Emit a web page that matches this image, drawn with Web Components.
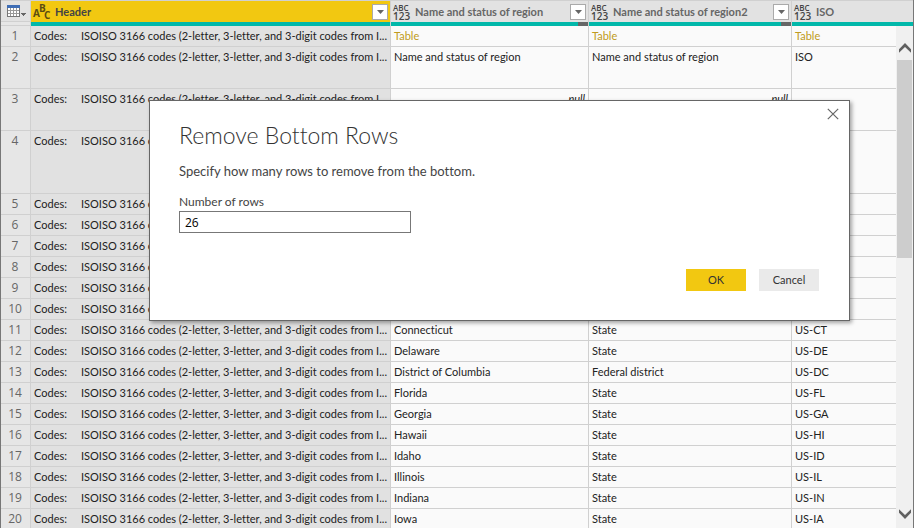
<!DOCTYPE html>
<html lang="en">
<head>
<meta charset="utf-8">
<title>Remove Bottom Rows</title>
<style>
html, body { margin: 0; height: 100%; }
body { font-family: Lato, "Open Sans", sans-serif; font-size: 11px; color: #222; font-variant-ligatures: none; }
</style>
</head>
<body>
<query-editor></query-editor>

<template id="editor-tpl">
<style>
:host { display: block; position: relative; height: 100vh; box-sizing: border-box; overflow: hidden; background: #fafafa; border-left: 1px solid #777; border-right: 1px solid #777; }
data-scrollbar { position: absolute; top: 26px; right: 0; bottom: 0; }
remove-rows-dialog { position: absolute; top: 100px; left: 148px; right: 63px; }
</style>
<data-grid></data-grid>
<data-scrollbar></data-scrollbar>
<remove-rows-dialog heading="Remove Bottom Rows">
  <span slot="description">Specify how many rows to remove from the bottom.</span>
  <span slot="label">Number of rows</span>
</remove-rows-dialog>
</template>

<template id="grid-tpl">
<style>
:host { display: block; }
table { width: 100%; table-layout: fixed; border-collapse: separate; border-spacing: 0; border-top: 1px solid #d0d0d0; }
.c0 { width: 30px; } .c1 { width: 360px; } .c2 { width: 198px; } .c3 { width: 203px; }
th, td { box-sizing: border-box; padding: 0; text-align: left; vertical-align: top; border-right: 1px solid #d0d0d0; border-bottom: 1px solid #d0d0d0; }
th:last-child, td:last-child { border-right: 0; }
thead th { height: 21px; background: #e2e2e2; border-bottom: 0; }
thead th.sel { background: #f2c811; }
thead .corner { border-bottom: 1px solid #d0d0d0; }
thead .q td { height: 4px; border-bottom: 0; line-height: 0; background: #01b8aa; }
thead .q td:first-child { background: #e6e6e6; border-bottom: 1px solid #d0d0d0; }
thead .q .part { background: linear-gradient(to left, #666 10px, #01b8aa 10px); }
tbody th, tbody td { height: 21px; line-height: 20px; white-space: pre; overflow: hidden; background: #fafafa; }
tbody th { background: #e6e6e6; color: #666; font: 12px/20px "Open Sans", sans-serif; text-align: center; padding-right: 1px; }
tbody td { padding: 0 3px; }
tbody td.sel { background: #e1e1e1; tab-size: 47px; }
tr.h2 td { height: 42px; } tr.h3 td { height: 63px; }
.link { color: #c09a20; text-decoration: none; }
.null { text-align: right; font-style: italic; }
</style>
<table>
<colgroup><col class="c0"><col class="c1"><col class="c2"><col class="c3"><col></colgroup>
<thead>
<tr>
<th class="corner"><table-menu></table-menu></th>
<th class="sel"><column-header type="text" selected filter>Header</column-header></th>
<th><column-header filter>Name and status of region</column-header></th>
<th><column-header filter>Name and status of region2</column-header></th>
<th><column-header>ISO</column-header></th>
</tr>
<tr class="q"><td></td><td></td><td class="part"></td><td class="part"></td><td></td></tr>
</thead>
<tbody></tbody>
</table>
</template>

<template id="menu-tpl">
<style>
:host { display: block; height: 20px; }
button { display: flex; align-items: center; width: 100%; height: 20px; padding: 0 0 0 6px; border: 0; background: none; }
svg { display: block; }
</style>
<button aria-label="Table options">
<svg width="20" height="13" viewBox="0 0 20 13" shape-rendering="crispEdges">
<path fill="#fff" d="M0 0h13v12H0z"/>
<path fill="#3e6db5" d="M0 0h13v3H0z"/>
<path fill="#777" d="M0 3h1v9H0zM12 3h1v9h-1zM0 11h13v1H0z"/>
<path fill="#999" d="M3 3h1v8H3zM6 3h1v8H6zM9 3h1v8H9zM1 5h11v1H1zM1 8h11v1H1z"/>
<path fill="#666" d="M14 8h5v1h-1v1h-1v1h-1v-1h-1V9h-1z"/>
</svg>
</button>
</template>

<template id="header-tpl">
<style>
:host { display: flex; align-items: center; height: 21px; padding: 0 2px; font-weight: 700; color: #666; }
:host([selected]) { color: #444; }
.any { display: grid; width: 18px; font: 600 8px/9px "Open Sans", sans-serif; color: #444; }
.any b { font-weight: 600; font-size: 10px; }
.abc { display: flex; align-items: start; width: 18px; height: 20px; font: 700 10px/10px "Open Sans", sans-serif; color: #5b4d12; }
.abc i { font-style: normal; width: 5px; }
.abc i:nth-child(1) { padding-top: 6px; width: 6px; }
.abc i:nth-child(2) { padding-top: 1px; }
.abc i:nth-child(3) { padding-top: 8px; }
.name { flex: 1; padding-left: 4px; line-height: 20px; white-space: nowrap; }
button { display: grid; place-items: center; width: 16px; height: 16px; padding: 0; border: 1px solid #aaa; background: #fff; }
</style>
<span class="icon"></span>
<span class="name"><slot></slot></span>
</template>

<template id="scroll-tpl">
<style>
:host { display: flex; flex-direction: column; width: 17px; background: #f0f0f0; }
button { display: grid; place-items: center; height: 34px; padding: 9px 0 0; border: 0; background: none; }
button:last-child { height: 28px; padding: 0; }
.track { flex: 1; padding: 0 1px; }
.thumb { height: 45%; background: #cdcdcd; }
</style>
<button aria-label="Scroll up"><svg width="12" height="10" viewBox="0 0 12 10"><path d="M0 6.2 6 0l6 6.2v3.6L6 4 0 9.800z" fill="#606060"/></svg></button>
<div class="track"><div class="thumb"></div></div>
<button aria-label="Scroll down"><svg width="12" height="10" viewBox="0 0 12 10"><path d="M0 .2 6 6l6-5.800v3.600L6 10 0 3.800z" fill="#606060"/></svg></button>
</template>

<template id="dialog-tpl">
<style>
:host { display: block; box-sizing: border-box; background: #fff; border: 1px solid #666; box-shadow: 2px 2px 4px rgba(0,0,0,.35); }
form { position: relative; padding: 20px 30px 29px 29px; }
h1 { margin: 0; font-weight: 300; font-size: 23px; line-height: 28px; color: #333; }
p { margin: 12px 0 0; font-size: 13px; line-height: 20px; color: #444; }
label { display: block; margin-top: 12px; font-size: 12px; line-height: 18px; color: #444; }
input { display: block; box-sizing: border-box; width: 232px; max-width: 100%; height: 22px; padding: 0 5px; border: 1px solid #777; border-radius: 0; outline: 0; background: #fff; font: 12px/20px "Open Sans", sans-serif; color: #000; }
.actions { display: flex; justify-content: flex-end; gap: 13px; margin-top: 36px; }
.actions button { width: 60px; height: 22px; padding: 0; border: 0; background: #eaeaea; font: 11px/22px Lato, sans-serif; color: #333; }
.actions .ok { background: #f2c811; }
.close { position: absolute; top: 5px; right: 8px; width: 16px; height: 16px; padding: 0; border: 0; background: none; }
.close svg { display: block; margin: auto; }
</style>
<form role="dialog" aria-labelledby="t" onsubmit="return false">
<h1 id="t"></h1>
<p><slot name="description"></slot></p>
<label for="n"><slot name="label"></slot></label>
<input id="n" type="text" inputmode="numeric" value="26">
<div class="actions"><button class="ok" type="submit">OK</button><button type="button">Cancel</button></div>
<button class="close" type="button" aria-label="Close"><svg width="12" height="12" viewBox="0 0 12 12"><path d="m.8.8 10.400 10.400M11.200.8.8 11.200" stroke="#666" stroke-width="1.200"/></svg></button>
</form>
</template>

<script>
class TemplateElement extends HTMLElement {
  constructor() {
    super();
    this.attachShadow({ mode: 'open' }).append(document.getElementById(this.constructor.tpl).content.cloneNode(true));
  }
}

customElements.define('table-menu', class extends TemplateElement { static tpl = 'menu-tpl'; });
customElements.define('data-scrollbar', class extends TemplateElement { static tpl = 'scroll-tpl'; });

customElements.define('column-header', class extends TemplateElement {
  static tpl = 'header-tpl';
  connectedCallback() {
    if (this.ready) return;
    this.ready = true;
    const icon = this.shadowRoot.querySelector('.icon');
    icon.innerHTML = this.getAttribute('type') === 'text'
      ? '<span class="abc"><i>A</i><i>B</i><i>C</i></span>'
      : '<span class="any"><span>ABC</span><b>123</b></span>';
    if (this.hasAttribute('filter')) {
      const button = document.createElement('button');
      button.setAttribute('aria-label', 'Filter ' + this.textContent);
      button.innerHTML = '<svg width="7" height="4" viewBox="0 0 7 4"><path d="M0 0h7L3.500 4z" fill="#666"/></svg>';
      this.shadowRoot.append(button);
    }
  }
});

customElements.define('remove-rows-dialog', class extends TemplateElement {
  static tpl = 'dialog-tpl';
  connectedCallback() { this.shadowRoot.querySelector('h1').textContent = this.getAttribute('heading'); }
});

const nested = { label: 'Table' };
const ROWS = [
  [nested, nested, nested],
  ['Name and status of region', 'Name and status of region', 'ISO', 'h2'],
  [null, null, '', 'h2'],
  ['', '', '', 'h3'],
  ['', '', ''], ['', '', ''], ['', '', ''], ['', '', ''], ['', '', ''], ['', '', ''],
  ['Connecticut', 'State', 'US-CT'],
  ['Delaware', 'State', 'US-DE'],
  ['District of Columbia', 'Federal district', 'US-DC'],
  ['Florida', 'State', 'US-FL'],
  ['Georgia', 'State', 'US-GA'],
  ['Hawaii', 'State', 'US-HI'],
  ['Idaho', 'State', 'US-ID'],
  ['Illinois', 'State', 'US-IL'],
  ['Indiana', 'State', 'US-IN'],
  ['Iowa', 'State', 'US-IA']
];

customElements.define('data-grid', class extends TemplateElement {
  static tpl = 'grid-tpl';
  connectedCallback() {
    const cell = v => v === null ? '<td class="null">null</td>'
      : v === nested ? `<td><a class="link" href="#">${v.label}</a></td>` : `<td>${v}</td>`;
    this.shadowRoot.querySelector('tbody').innerHTML = ROWS.map((r, i) =>
      `<tr class="${r[3] || ''}"><th scope="row">${i + 1}</th>` +
      `<td class="sel">Codes:\tISOISO 3166 codes (2-letter, 3-letter, and 3-digit codes from I...</td>` +
      r.slice(0, 3).map(cell).join('') + '</tr>').join('');
  }
});

customElements.define('query-editor', class extends TemplateElement { static tpl = 'editor-tpl'; });
</script>
</body>
</html>
